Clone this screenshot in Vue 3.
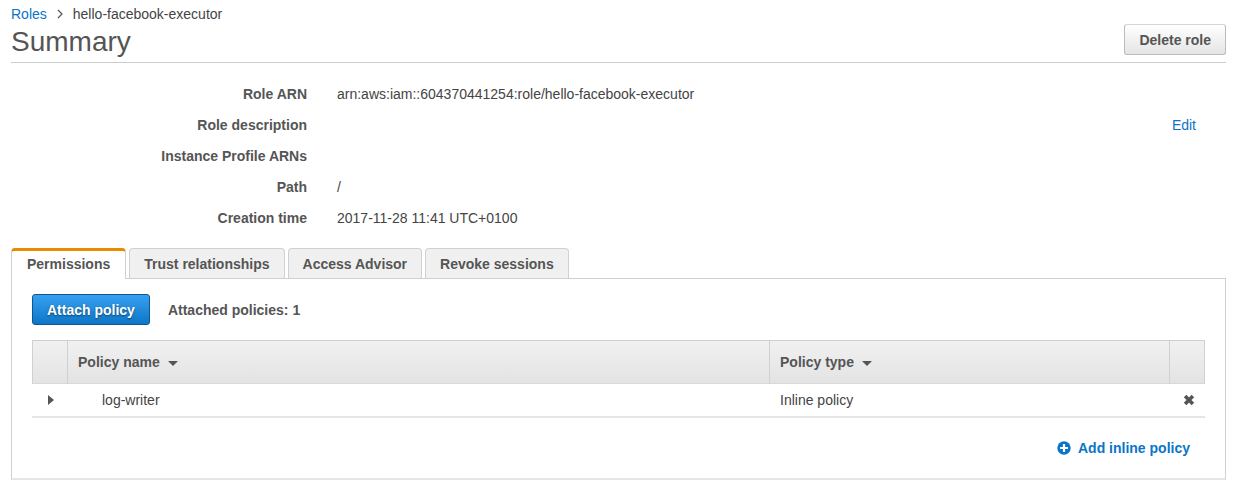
<script setup>
import { ref } from 'vue'

const details = [
  { label: 'Role ARN', value: 'arn:aws:iam::604370441254:role/hello-facebook-executor' },
  { label: 'Role description', value: '', editable: true },
  { label: 'Instance Profile ARNs', value: '' },
  { label: 'Path', value: '/' },
  { label: 'Creation time', value: '2017-11-28 11:41 UTC+0100' }
]
const tabs = ['Permissions', 'Trust relationships', 'Access Advisor', 'Revoke sessions']
const activeTab = ref('Permissions')
const policies = [{ name: 'log-writer', type: 'Inline policy' }]
</script>

<template>
  <main class="page">
    <nav class="breadcrumb" aria-label="Breadcrumb">
      <a href="#">Roles</a>
      <svg width="6" height="10" viewBox="0 0 6 10" aria-hidden="true">
        <path d="M1 1 L5 5 L1 9" fill="none" stroke="#555" stroke-width="1.2" />
      </svg>
      <span>hello-facebook-executor</span>
    </nav>
    <header class="header">
      <h1>Summary</h1>
      <button type="button" class="btn">Delete role</button>
    </header>

    <dl class="details">
      <div v-for="item in details" :key="item.label" class="detail">
        <dt>{{ item.label }}</dt>
        <dd>
          <span>{{ item.value }}</span>
          <a v-if="item.editable" href="#">Edit</a>
        </dd>
      </div>
    </dl>

    <div class="tabs" role="tablist">
      <button
        v-for="tab in tabs"
        :key="tab"
        type="button"
        role="tab"
        class="tab"
        :class="{ active: tab === activeTab }"
        :aria-selected="tab === activeTab"
        @click="activeTab = tab"
      >{{ tab }}</button>
    </div>

    <section class="panel" role="tabpanel">
      <div class="toolbar">
        <button type="button" class="btn primary">Attach policy</button>
        <strong>Attached policies: {{ policies.length }}</strong>
      </div>

      <table class="policies">
        <colgroup>
          <col class="col-expand" />
          <col />
          <col class="col-type" />
          <col class="col-remove" />
        </colgroup>
        <thead>
          <tr>
            <th></th>
            <th>
              <button type="button" class="sort">
                Policy name
                <svg width="10" height="5" viewBox="0 0 10 5" aria-hidden="true"><path d="M0 0 H10 L5 5 Z" fill="#555" /></svg>
              </button>
            </th>
            <th>
              <button type="button" class="sort">
                Policy type
                <svg width="10" height="5" viewBox="0 0 10 5" aria-hidden="true"><path d="M0 0 H10 L5 5 Z" fill="#555" /></svg>
              </button>
            </th>
            <th></th>
          </tr>
        </thead>
        <tbody>
          <tr v-for="policy in policies" :key="policy.name">
            <td class="action">
              <button type="button" class="icon" aria-label="Expand policy">
                <svg width="6" height="10" viewBox="0 0 6 10" aria-hidden="true"><path d="M0 0 V10 L6 5 Z" fill="#555" /></svg>
              </button>
            </td>
            <td class="name">{{ policy.name }}</td>
            <td>{{ policy.type }}</td>
            <td class="action">
              <button type="button" class="icon" aria-label="Remove policy">
                <svg width="12" height="12" viewBox="0 0 12 12" aria-hidden="true">
                  <path d="M2.1 2.1 L9.9 9.9 M9.9 2.1 L2.1 9.9" stroke="#555" stroke-width="3.6" />
                </svg>
              </button>
            </td>
          </tr>
        </tbody>
      </table>

      <a href="#" class="add">
        <svg width="14" height="14" viewBox="0 0 14 14" aria-hidden="true">
          <circle cx="7" cy="7" r="6.7" fill="#0a74c8" />
          <path d="M7 3 V11 M3 7 H11" stroke="#fff" stroke-width="2.2" />
        </svg>
        Add inline policy
      </a>
    </section>
  </main>
</template>

<style>
body {
  background: #fff;
}
</style>

<style scoped>
.page {
  padding: 4px 9px 16px 11px;
  font: 14px/20px "Liberation Sans", Arial, sans-serif;
  color: #444;
}
button {
  font: inherit;
  color: inherit;
  cursor: pointer;
}
svg {
  display: block;
  flex: none;
}
a {
  color: #0a74c8;
  text-decoration: none;
}
.breadcrumb {
  display: flex;
  align-items: center;
  gap: 10px;
}
.header {
  display: flex;
  align-items: flex-start;
  justify-content: space-between;
  padding-bottom: 2px;
  border-bottom: 1px solid #ccc;
}
h1 {
  margin: 0;
  font-size: 28px;
  line-height: 36px;
  font-weight: 400;
  color: #555;
}
.btn {
  height: 31px;
  padding: 0 14px;
  border: 1px solid #bbb;
  border-top-color: #d5d5d5;
  border-radius: 3px;
  background: linear-gradient(#fff, #e4e4e4);
  font-weight: 700;
  color: #555;
}
.btn.primary {
  border-color: #0d568f;
  background: linear-gradient(#38a0f0, #0d76c6);
  color: #fff;
  text-shadow: 0 1px 2px rgba(0, 0, 0, 0.5);
}
.details {
  margin: 16px 0 14px;
}
.detail {
  display: flex;
  gap: 30px;
  padding-right: 30px;
  line-height: 31px;
}
dt {
  flex: none;
  width: 296px;
  text-align: right;
  font-weight: 700;
  color: #555;
}
dd {
  display: flex;
  flex: 1;
  justify-content: space-between;
  margin: 0;
}
.tabs {
  display: flex;
  gap: 3px;
}
.tab {
  height: 30px;
  padding: 0 14px;
  border: 1px solid #d0d0d0;
  border-bottom: 0;
  border-radius: 4px 4px 0 0;
  background: #f0f0f0;
  font-weight: 700;
  color: #555;
}
.tab.active {
  height: 31px;
  margin-bottom: -1px;
  padding: 0 15px 2px;
  border-top: 3px solid #e88b01;
  background: #fff;
  z-index: 1;
}
.panel {
  padding: 15px 20px 20px;
  border: 1px solid #d0d0d0;
  border-bottom: 2px solid #e5e5e5;
}
.toolbar {
  display: flex;
  align-items: center;
  gap: 18px;
  margin-bottom: 15px;
  color: #555;
}
.policies {
  width: 100%;
  table-layout: fixed;
  border-collapse: separate;
  border-spacing: 0;
}
.col-expand {
  width: 36px;
}
.col-type {
  width: 400px;
}
.col-remove {
  width: 35px;
}
thead tr {
  background: linear-gradient(#f1f1f1, #e3e3e3);
}
th {
  height: 42px;
  padding: 0 10px;
  border: 1px solid #d0d0d0;
  border-left: 0;
  border-bottom-color: #d9d9d9;
  text-align: left;
}
th:first-child {
  border-left: 1px solid #d0d0d0;
}
.sort {
  display: flex;
  align-items: center;
  gap: 8px;
  padding: 0;
  border: 0;
  background: none;
  font-weight: 700;
  color: #555;
}
.sort svg {
  margin-top: 3px;
}
td {
  height: 32px;
  padding: 0 10px;
  border-bottom: 2px solid #e5e5e5;
}
.name {
  padding-left: 34px;
}
.action {
  padding: 0 0 0 2px;
}
.icon {
  display: block;
  margin: 0 auto;
  padding: 2px;
  border: 0;
  background: none;
}
.add {
  display: flex;
  align-items: center;
  justify-content: flex-end;
  gap: 7px;
  margin-top: 20px;
  padding-right: 15px;
  font-weight: 700;
}
</style>
